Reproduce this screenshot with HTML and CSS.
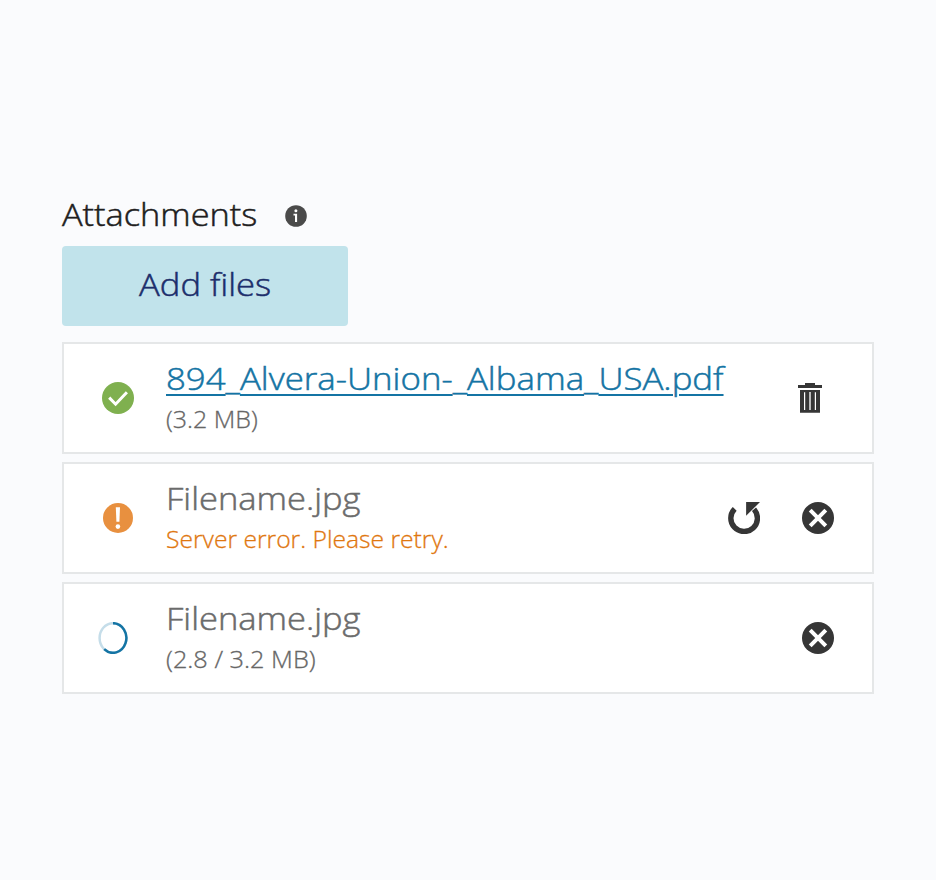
FILE: index.html
```html
<!DOCTYPE html>
<html lang="en">
<head>
<meta charset="utf-8">
<title>Attachments</title>
<link rel="stylesheet" href="styles.css">
</head>
<body>
<main class="attachments">
  <header class="heading">
    <h1 class="title"><span class="t-title">Attachments</span></h1>
    <svg class="info" viewBox="0 0 22 22"><circle cx="11" cy="11" r="10.8" fill="#4a4a4a"/><circle cx="10.9" cy="5.7" r="1.5" fill="#fff"/><path d="M8.5 8.8H12.1V16.9H10V10.4H8.5Z" fill="#fff"/></svg>
  </header>
  <button class="add" type="button"><span class="t-add">Add files</span></button>
  <ul class="files">
    <li class="file">
      <svg class="status" viewBox="0 0 32 32"><circle cx="16" cy="16" r="16" fill="#7fb04f"/><path d="M7.2 15.6L13.6 22.2L24.9 10.2" fill="none" stroke="#fff" stroke-width="3"/></svg>
      <div class="details">
        <a class="name link" href="#"><u>894</u>_<u>Alvera-Union-</u>_<u>Albama</u>_<u>USA.pdf</u></a>
        <span class="meta size-total">(3.2 MB)</span>
      </div>
      <svg class="trash" viewBox="0 0 24 30"><path d="M0 2H7V0H17V2H24V5H0Z" fill="#363636"/><path fill-rule="evenodd" d="M2 7H22V29.7H2ZM6 9.2V27H7.2V9.2ZM11 9.2V27H13V9.2ZM16.8 9.2V27H18V9.2Z" fill="#363636"/><path d="M11 9.2H13V27H11Z" fill="#bbb"/></svg>
    </li>
    <li class="file">
      <svg class="status" viewBox="0 0 32 32"><circle cx="16" cy="16" r="15" fill="#e8903f"/><path d="M13.8 5.2H18L17.4 19.8H14.4Z" fill="#fff"/><circle cx="15.9" cy="24.6" r="2.3" fill="#fff"/></svg>
      <div class="details">
        <span class="name pending">Filename.jpg</span>
        <span class="meta error">Server error. Please retry.</span>
      </div>
      <svg class="retry" viewBox="0 0 32 32"><path d="M6.7 6.8A13.3 13.3 0 1 0 26 7.3" fill="none" stroke="#363636" stroke-width="5.4"/><path d="M18.1 0H32L18.1 13.8Z" fill="#363636"/></svg>
      <svg class="cancel" viewBox="0 0 32 32"><circle cx="16" cy="16" r="16" fill="#363636"/><path d="M8.2 8.2L23.8 23.8M23.8 8.2L8.2 23.8" stroke="#fff" stroke-width="4"/></svg>
    </li>
    <li class="file">
      <svg class="status spinner" viewBox="0 0 32 32"><ellipse cx="16" cy="16" rx="13.4" ry="14.8" fill="none" stroke="#c5dde9" stroke-width="2.5"/><path d="M16 1.2A13.4 14.8 0 1 1 7.2 27.2" fill="none" stroke="#1474a4" stroke-width="2.5"/></svg>
      <div class="details">
        <span class="name pending">Filename.jpg</span>
        <span class="meta progress">(2.8 / 3.2 MB)</span>
      </div>
      <svg class="cancel" viewBox="0 0 32 32"><circle cx="16" cy="16" r="16" fill="#363636"/><path d="M8.2 8.2L23.8 23.8M23.8 8.2L8.2 23.8" stroke="#fff" stroke-width="4"/></svg>
    </li>
  </ul>
</main>
</body>
</html>
```
FILE: styles.css
```css
* { box-sizing: border-box; }
body {
  margin: 0;
  min-height: 880px;
  background: #fafbfd;
  font-family: "Open Sans", sans-serif;
  font-weight: 300;
  -webkit-text-stroke: 0.5px currentColor;
}
svg { display: block; flex: none; }
.attachments { width: 812px; margin-left: 62px; padding-top: 192px; }
.heading { display: flex; align-items: center; height: 48px; }
.title { margin: 0; padding-bottom: 4px; width: 223px; font-size: 32px; line-height: 44px; font-weight: 300; color: #1e1e1e; white-space: nowrap; }
.t-title { display: inline-block; transform: scaleX(1.073); transform-origin: left; }
.info { width: 22px; height: 22px; }
.add {
  display: block;
  width: 286px;
  height: 80px;
  margin: 6px 0 16px;
  padding: 0 0 6px;
  border: 0;
  border-radius: 4px;
  background: #c1e3eb;
  color: #1c2e6b;
  font: inherit;
  font-size: 32px;
}
.t-add { display: inline-block; transform: scaleX(1.08); }
.files { display: flex; flex-direction: column; gap: 8px; margin: 0; padding: 0; list-style: none; }
.file { display: flex; align-items: center; height: 112px; padding: 0 38px; border: 2px solid #e5e7e8; background: #fff; }
.status { width: 32px; height: 32px; }
.spinner { margin-left: -5px; margin-right: 5px; }
.details { display: flex; flex-direction: column; align-items: flex-start; flex: 1; margin-left: 32px; padding-bottom: 3px; white-space: nowrap; }
.name { font-size: 32px; line-height: 44px; transform: scaleX(1.078); transform-origin: left; }
.link { color: #1474a4; text-decoration: none; transform: scaleX(1.088); }
.link u { text-decoration-thickness: 2px; text-underline-offset: 4px; }
.pending { color: #6b6b6b; }
.meta { font-size: 24px; line-height: 37px; color: #666; transform-origin: left; -webkit-text-stroke-width: 0.3px; }
.size-total { transform: scaleX(1.04); }
.progress { transform: scaleX(1.055); }
.error { color: #df770f; transform: scaleX(1.027); }
.trash { width: 24px; height: 30px; margin-right: 12px; }
.retry { width: 32px; height: 32px; margin-right: 42px; }
.cancel { width: 32px; height: 32px; }
```
